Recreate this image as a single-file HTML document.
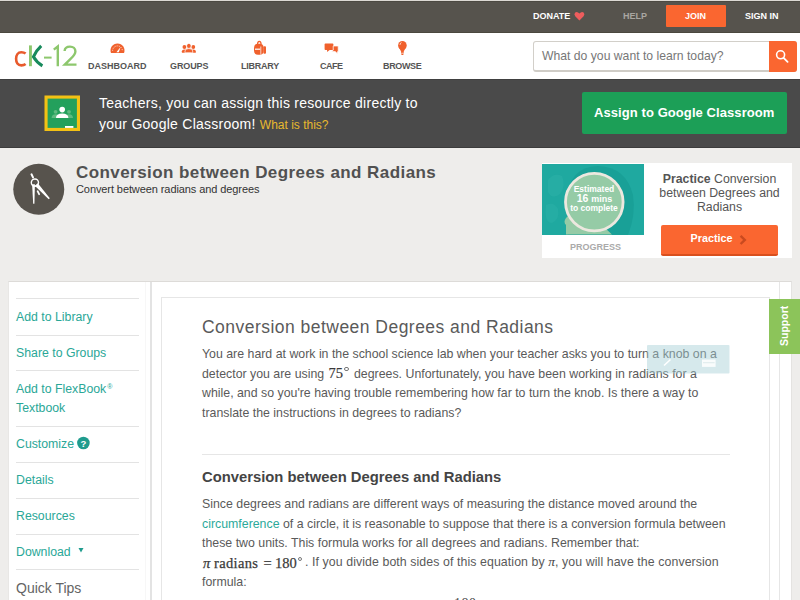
<!DOCTYPE html>
<html><head><meta charset="utf-8">
<style>
*{margin:0;padding:0;box-sizing:border-box}
html,body{width:800px;height:600px;overflow:hidden;background:#eeedeb;font-family:"Liberation Sans",sans-serif;position:relative}
.a{position:absolute;white-space:nowrap}
#topline{left:0;top:0;width:800px;height:1px;background:#dcd9d4}
#top{left:0;top:1px;width:800px;height:32px;background:#56534d;border-top:1px solid #4c4942;border-bottom:1px solid #4b483f}
.tb{font-size:9px;font-weight:bold;color:#fff;top:11px;line-height:10px}
#join{left:666px;top:5px;width:60px;height:22px;background:#fa6630;border-radius:1px}
#nav{left:0;top:33px;width:800px;height:46px;background:#fff}
.nl{top:61px;font-size:9px;font-weight:bold;color:#555;line-height:10px}
#search{left:533px;top:41px;width:264px;height:31px;border:1.5px solid #d2cfc9;border-bottom:2px solid #cfccc6;border-radius:3px;background:#fff}
.ph{left:542px;top:49px;font-size:12.2px;color:#777;line-height:14px}
#sbtn{left:769px;top:41px;width:28px;height:31px;background:#fa6630;border-radius:0 3px 3px 0}
#banner{left:0;top:79px;width:800px;height:69px;background:#4a4a4a;border-top:1px solid #404040;border-bottom:1px solid #3c3c3c}
.bt{left:99px;font-size:14px;color:#fff;line-height:16px;letter-spacing:0.26px}
#assign{left:582px;top:92px;width:205px;height:42px;background:#1c9f57;border-radius:2px}
.at{left:594px;top:106px;color:#fff;font-weight:bold;font-size:13px;line-height:14px;letter-spacing:0.08px}
#title{left:76px;top:163px;font-size:17px;font-weight:bold;color:#515151;line-height:20px;letter-spacing:0.43px}
#subtitle{left:76px;top:183px;font-size:11px;color:#333;line-height:12px;letter-spacing:-0.09px}
#circle{left:13px;top:163px;width:52px;height:52px;border-radius:50%;background:#57534d}
#card{left:542px;top:163px;width:250px;height:95px;background:#fff}
#teal{left:542px;top:164px;width:102px;height:71px;background:#1ea9a0;overflow:hidden}
.ct{font-size:12.3px;color:#555;line-height:14px}
#pbtn{left:661px;top:225px;width:117px;height:31px;background:#fa6630;border-radius:2px;border-bottom:2px solid #d9501e}
#sidebar{left:8px;top:281px;width:784px;height:319px;background:#fff;border-top:1px solid #dddbd8;border-left:1px solid #e8e7e5;border-right:1px solid #e4e3e1}
#main{left:150px;top:282px;width:2px;height:318px;background:#e3e3e3}
#inner{left:161px;top:297px;width:609px;height:303px;border:1px solid #e6e6e6;border-bottom:none;background:#fff}
.sl{left:16px;font-size:12.3px;color:#2aa797;line-height:14px}
.sline{position:absolute;left:16px;width:123px;height:1px;background:#e3e3e3}
#support{left:769px;top:299px;width:31px;height:55px;background:#8cc45a}
.p{left:202px;font-size:12.35px;color:#5a5a5a;line-height:14px}
.m{font-family:"Liberation Serif",serif}
</style></head><body>
<div id="topline" class="a"></div>
<div id="top" class="a"></div>
<div class="a tb" style="left:533px">DONATE</div>
<div class="a tb" style="left:623px;color:#a9a6a1">HELP</div>
<div class="a tb" style="left:745px">SIGN IN</div>
<div id="join" class="a"></div>
<div class="a tb" style="left:685px">JOIN</div>

<div id="nav" class="a"></div>
<div class="a nl" style="left:88px">DASHBOARD</div>
<div class="a nl" style="left:170px;letter-spacing:-0.1px">GROUPS</div>
<div class="a nl" style="left:241px;letter-spacing:-0.25px">LIBRARY</div>
<div class="a nl" style="left:320px;letter-spacing:-0.5px">CAFE</div>
<div class="a nl" style="left:383px;letter-spacing:-0.35px">BROWSE</div>
<div id="search" class="a"></div>
<div class="a ph">What do you want to learn today?</div>
<div id="sbtn" class="a"></div>

<div id="banner" class="a"></div>
<div class="a bt" style="top:95px">Teachers, you can assign this resource directly to</div>
<div class="a bt" style="top:116px">your Google Classroom! <span style="color:#e8b92e;font-size:12px;letter-spacing:0">What is this?</span></div>
<div id="assign" class="a"></div>
<div class="a at">Assign to Google Classroom</div>

<div id="title" class="a">Conversion between Degrees and Radians</div>
<div id="subtitle" class="a">Convert between radians and degrees</div>

<div id="card" class="a"></div>
<svg class="a" style="left:542px;top:164px" width="102" height="71" viewBox="542 164 102 71">
<rect x="542" y="164" width="102" height="71" fill="#1fa9a0"/>
<path d="M548 180 q6 -8 14 -4 q4 10 -2 18 q-8 6 -12 -2 z" fill="#2bb1a7" opacity="0.6"/>
<path d="M546 205 q8 -4 12 4 q2 10 -6 14 q-8 0 -6 -18 z" fill="#2bb1a7" opacity="0.5"/>
<path d="M568 235 L568 200 Q568 167 598 166 Q626 167 633 195 Q636 215 628 235 Z" fill="#19a097"/>
<path d="M566 234.6 L566 225 Q563 222 566 218 L570 214 L590 214 L612 234.6 Z" fill="#95cba6"/>
<circle cx="594.3" cy="202.1" r="28.8" fill="#95cba6" stroke="#ece8df" stroke-width="2.8"/>
<g font-family="Liberation Sans" font-weight="bold" fill="#fff" text-anchor="middle">
<text x="594" y="191.8" font-size="8.5">Estimated</text>
<text x="594.5" y="202.4" font-size="10.5">16 <tspan font-size="9">mins</tspan></text>
<text x="594" y="211" font-size="8.5">to complete</text>
</g>
</svg>
<div class="a" style="left:570px;top:242px;font-size:9px;font-weight:bold;color:#aaa;line-height:10px">PROGRESS</div>
<div class="a ct" style="left:650px;width:139px;text-align:center;top:172px"><b>Practice</b> Conversion<br>between Degrees and<br>Radians</div>
<div id="pbtn" class="a"></div>
<div class="a" style="left:690.5px;top:232px;font-size:10.8px;font-weight:bold;color:#fff;line-height:12px">Practice</div>

<div id="sidebar" class="a"></div>
<div class="sline" style="top:298px"></div>
<div class="a sl" style="top:310px">Add to Library</div>
<div class="sline" style="top:335px"></div>
<div class="a sl" style="top:346px">Share to Groups</div>
<div class="sline" style="top:370px"></div>
<div class="a sl" style="top:382px">Add to FlexBook<span style="font-size:7px;position:relative;top:-4px;margin-left:1px">®</span></div>
<div class="a sl" style="top:401px">Textbook</div>
<div class="sline" style="top:426px"></div>
<div class="a sl" style="top:437px">Customize</div>
<div class="sline" style="top:462px"></div>
<div class="a sl" style="top:473px">Details</div>
<div class="sline" style="top:498px"></div>
<div class="a sl" style="top:509px">Resources</div>
<div class="sline" style="top:534px"></div>
<div class="a sl" style="top:545px">Download</div>
<div class="sline" style="top:569px"></div>
<div class="a" style="left:16px;top:580px;font-size:14px;color:#646464;line-height:16px">Quick Tips</div>

<div id="main" class="a"></div>
<div id="inner" class="a"></div>
<div class="a" style="left:145px;top:282px;width:1px;height:318px;background:#f7f7f7"></div>
<div class="a" style="left:779px;top:282px;width:1px;height:318px;background:#e6e6e6"></div>
<div class="a" style="left:202px;top:318px;font-size:17.5px;color:#5a5a5a;line-height:18px;letter-spacing:0.47px">Conversion between Degrees and Radians</div>
<div class="a p" style="top:347px">You are hard at work in the school science lab when your teacher asks you to turn a knob on a</div>
<div class="a p" style="top:367px">detector you are using</div>
<div class="a m" style="left:328.5px;top:365px;font-size:14.5px;line-height:16px;color:#3a3a3a;-webkit-text-stroke:0.2px #3a3a3a">75</div>
<div class="a" style="left:344.3px;top:367px;width:4.4px;height:4.4px;border:0.9px solid #777;border-radius:50%"></div>
<div class="a p" style="left:354px;top:367px">degrees. Unfortunately, you have been working in radians for a</div>
<div class="a p" style="top:386px">while, and so you're having trouble remembering how far to turn the knob. Is there a way to</div>
<div class="a p" style="top:406px">translate the instructions in degrees to radians?</div>
<div class="a" style="left:202px;top:454px;width:528px;height:1px;background:#e6e6e6"></div>
<div class="a" style="left:202px;top:469px;font-size:14.8px;font-weight:bold;color:#444;line-height:16px">Conversion between Degrees and Radians</div>
<div class="a p" style="top:497px">Since degrees and radians are different ways of measuring the distance moved around the</div>
<div class="a p" style="top:517px"><span style="color:#2ba99a">circumference</span> of a circle, it is reasonable to suppose that there is a conversion formula between</div>
<div class="a p" style="top:536px">these two units. This formula works for all degrees and radians. Remember that:</div>
<div class="a m" style="left:203px;top:555px;font-size:14.5px;line-height:16px;color:#3a3a3a;-webkit-text-stroke:0.25px #3a3a3a;font-style:italic">π</div>
<div class="a m" style="left:214px;letter-spacing:0.35px;top:555px;font-size:14.5px;line-height:16px;color:#3a3a3a;-webkit-text-stroke:0.25px #3a3a3a">radians</div>
<div class="a m" style="left:263.5px;top:555px;font-size:14.5px;line-height:16px;color:#3a3a3a;-webkit-text-stroke:0.25px #3a3a3a">=</div>
<div class="a m" style="left:275px;top:555px;font-size:14.5px;line-height:16px;color:#3a3a3a;-webkit-text-stroke:0.25px #3a3a3a">180</div>
<div class="a" style="left:297.5px;top:556.5px;width:4.4px;height:4.4px;border:0.9px solid #777;border-radius:50%"></div>
<div class="a p" style="left:305px;top:555px;letter-spacing:0.08px">. If you divide both sides of this equation by <span class="m" style="font-style:italic;font-size:13.5px;color:#444">π</span>, you will have the conversion</div>
<div class="a p" style="top:575px">formula:</div>
<div class="a m" style="left:454px;top:596px;font-size:14px;line-height:16px;color:#444;letter-spacing:0.5px">180</div>
<div id="support" class="a"></div>
<div class="a" style="left:764px;top:320px;width:40px;height:12px;line-height:12px;font-size:10.5px;font-weight:bold;color:#fff;text-align:center;transform:rotate(-90deg);z-index:6">Support</div>
<svg class="a" style="left:0;top:0;z-index:5" width="800" height="600" viewBox="0 0 800 600">
<!-- logo -->
<path d="M25.6 53.6 C24.4 52.6 23 52.2 21.4 52.2 C17.8 52.2 16.1 55.2 16.1 58.8 C16.1 62.4 17.8 65.4 21.4 65.4 C23 65.4 24.4 65 25.6 64" fill="none" stroke="#e85a2c" stroke-width="2.6"/>
<rect x="29" y="45.4" width="2.9" height="20.8" fill="#8dc76d"/>
<path d="M41.2 45.8 Q36.4 50.2 33.4 56.8 Q36.6 62.4 42.4 65.8" fill="none" stroke="#178a5c" stroke-width="3.1" stroke-linejoin="round"/>
<rect x="44" y="56.6" width="7.6" height="2" fill="#8dc76d"/>
<path d="M53.8 49.6 L57.8 46.4 L57.8 66.2" fill="none" stroke="#8dc76d" stroke-width="2.4"/>
<path d="M64.6 51 C64.8 47.8 67.2 46.6 70 46.6 C73.2 46.6 75.4 48.4 75.4 51.2 C75.4 54 73.6 56 70.8 58.6 L64.8 64.6 L76.5 64.6" fill="none" stroke="#8dc76d" stroke-width="2.4"/>
<!-- dashboard gauge -->
<path d="M111 53 A7 7 0 1 1 124 53 Z" fill="#f0612d"/>
<path d="M112.6 50.8 A4.9 4.9 0 0 1 122.4 50.8" fill="none" stroke="#fff" stroke-width="0.9" stroke-dasharray="1.1 1.1" opacity="0.85"/>
<path d="M116.4 52.2 L120.6 47 L118.8 52.2 Z" fill="#fff"/>
<!-- groups -->
<circle cx="184.4" cy="47" r="1.9" fill="#f0612d"/>
<circle cx="193.3" cy="47" r="1.9" fill="#f0612d"/>
<path d="M181.9 52.8 L181.9 51.2 Q181.9 49.4 184.4 49.4 Q186.4 49.4 186.4 51 L186.4 52.8 Z" fill="#f0612d"/>
<path d="M195.8 52.8 L195.8 51.2 Q195.8 49.4 193.3 49.4 Q191.3 49.4 191.3 51 L191.3 52.8 Z" fill="#f0612d"/>
<ellipse cx="188.85" cy="45.9" rx="2.3" ry="2.5" fill="#f0612d" stroke="#fff" stroke-width="0.7"/>
<path d="M185 52.8 L185 51 Q185 48.6 188.85 48.6 Q192.7 48.6 192.7 51 L192.7 52.8 Z" fill="#f0612d" stroke="#fff" stroke-width="0.7"/>
<!-- library backpack -->
<path d="M257.5 44.5 Q257.5 41.3 259.3 41.3 Q261.1 41.3 261.1 44.5" fill="none" stroke="#f0612d" stroke-width="1.3"/>
<rect x="254" y="43.8" width="9.6" height="10.9" rx="4" fill="#f0612d"/>
<rect x="263.4" y="46.2" width="2.6" height="7.5" rx="1" fill="#f0612d"/>
<rect x="255" y="48.6" width="5.2" height="1.2" fill="#fff"/>
<rect x="260.3" y="46.5" width="1" height="8" fill="#fff" opacity="0.7"/>
<!-- cafe -->
<rect x="324.6" y="43.6" width="8.8" height="6.5" rx="0.8" fill="#f0612d"/>
<path d="M327 50 L329.6 50 L327.2 52 Z" fill="#f0612d"/>
<path d="M333.2 46 L338.2 46 L338.2 51.6 L337.6 51.6 L337.2 53.4 L335.2 51.6 L331.5 51.6 L333.2 50.2 Z" fill="#f0612d" stroke="#fff" stroke-width="0.7"/>
<!-- bulb -->
<circle cx="402.4" cy="45.4" r="4.3" fill="#f0612d"/>
<path d="M398.6 47.2 Q400.6 50 401.2 52 L403.6 52 Q404.2 50 406.2 47.2 Z" fill="#f0612d"/>
<rect x="401" y="52.2" width="2.8" height="1.2" fill="#f0612d"/>
<rect x="401.4" y="53.8" width="2" height="1.2" fill="#f0612d"/>
<path d="M400 44.8 Q400.2 43 401.4 42.6" fill="none" stroke="#fff" stroke-width="0.9" opacity="0.9"/>
<!-- donate heart -->
<path d="M579.4 20.6 L575.2 16.2 Q573.6 14.2 575.2 12.6 Q577.2 11.2 579.4 13.6 Q581.6 11.2 583.6 12.6 Q585.2 14.2 583.6 16.2 Z" fill="#ee5d5d"/>
<!-- search icon -->
<circle cx="780.6" cy="54.8" r="4" fill="none" stroke="#fff" stroke-width="1.6"/>
<path d="M783.6 57.8 L787.6 61.8" stroke="#fff" stroke-width="1.8" stroke-linecap="round"/>
<!-- google classroom -->
<rect x="44.5" y="95.5" width="35.5" height="35.5" fill="#f3c114"/>
<rect x="47.6" y="98.6" width="29.3" height="29.3" fill="#23a05c"/>
<circle cx="55.6" cy="111.8" r="1.9" fill="#5fba80"/>
<circle cx="69" cy="111.8" r="1.9" fill="#5fba80"/>
<path d="M51.6 118 Q51.6 114.2 55.6 114.2 Q59.6 114.2 59.6 118 Z" fill="#5fba80"/>
<path d="M65 118 Q65 114.2 69 114.2 Q73 114.2 73 118 Z" fill="#5fba80"/>
<circle cx="62.2" cy="109.6" r="2.8" fill="#fff"/>
<path d="M56 118 Q56 113.4 62.2 113.4 Q68.4 113.4 68.4 118 Z" fill="#fff"/>
<rect x="65" y="126" width="8.4" height="1.9" fill="#fff"/>
<!-- compass circle -->
<circle cx="38.75" cy="189.25" r="25.5" fill="#57534d"/>
<path d="M31.5 174.3 L33 177.4" stroke="#fff" stroke-width="2" stroke-linecap="round"/>
<circle cx="34.9" cy="182.6" r="3.6" fill="none" stroke="#fff" stroke-width="1.4"/>
<path d="M32.1 184.2 L34.9 184.2 L34.4 203.8 L33.2 203.8 Z" fill="#fff"/>
<path d="M34.8 185.8 L37.8 183.3 L49.8 198.2 L48.7 199.3 Z" fill="#fff"/>
<path d="M37.6 191.2 L39.1 194.2" stroke="#fff" stroke-width="1.8" stroke-linecap="round"/>
<!-- practice arrow -->
<path d="M740.6 235.8 L744.8 239.9 L740.6 244" fill="none" stroke="#c94a1f" stroke-width="2.4"/>
<!-- overlay -->
<rect x="647" y="345" width="82.5" height="28.5" rx="1" fill="rgb(164,206,213)" opacity="0.45"/>
<path d="M664 365.5 L670.5 359.5" stroke="#fff" stroke-width="1.6"/>
<rect x="702" y="359.5" width="13.6" height="7.4" fill="#fff" opacity="0.85"/>
<rect x="703" y="362.3" width="11.6" height="0.9" fill="#dbe9ea"/>
<!-- sidebar help + dropdown -->
<circle cx="83.4" cy="443" r="6.3" fill="#1f9c8e"/>
<path d="M78.5 548 L83.5 548 L81 552.6 Z" fill="#1f9c8e"/>
<text x="83.4" y="447" font-family="Liberation Sans" font-weight="bold" font-size="9.5" fill="#fff" text-anchor="middle">?</text>
</svg>
</body></html>
